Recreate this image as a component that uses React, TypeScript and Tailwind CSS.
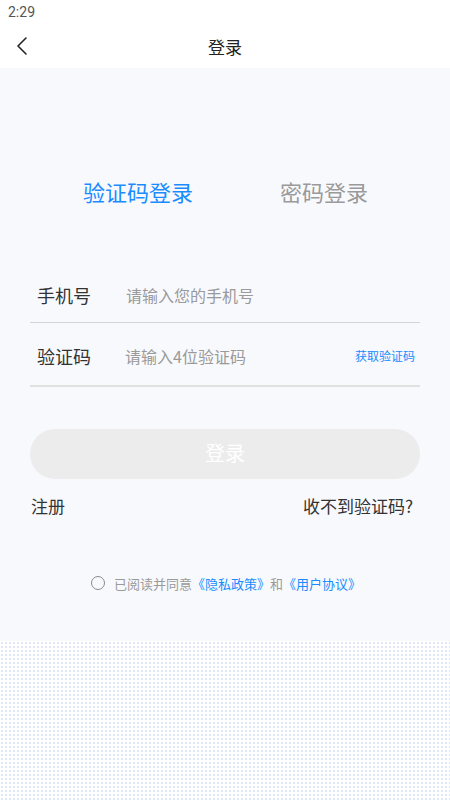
import React from "react";

export default function App() {
  const cjk = { fontFamily: '"Noto Sans CJK SC", "Noto Sans", sans-serif' };
  return (
    <div className="w-[450px] h-[800px] flex flex-col bg-[#f8f9fd] overflow-hidden" style={cjk}>
      <div className="bg-white h-[24px] flex items-center pl-[8px] text-[14px] text-[#555]" style={{ fontFamily: 'Roboto, "Noto Sans", sans-serif' }}>
        2:29
      </div>
      <div className="bg-white h-[44px] flex items-center relative">
        <svg className="ml-[15px]" width="14" height="20" viewBox="0 0 14 20" fill="none">
          <path d="M11 2 L3 10 L11 18" stroke="#222" strokeWidth="1.6" strokeLinecap="round" strokeLinejoin="round" />
        </svg>
        <div className="absolute left-0 right-0 text-center text-[17px] text-[#222] leading-none pointer-events-none">登录</div>
      </div>
      <div className="flex-1 flex flex-col">
        <div className="h-[573px] flex flex-col px-[30px] leading-none">
          <div className="flex mt-[104px] h-[38px] items-center">
            <div className="w-[216px] text-center text-[22px] text-[#1a8cff]">验证码登录</div>
            <div className="flex-1 text-center text-[22px] text-[#9a9a9a] pr-[18px]">密码登录</div>
          </div>
          <div className="mt-[57px] h-[56px] flex items-center border-b border-[#d4d4d4]">
            <div className="w-[96px] pl-[7px] text-[18px] text-[#333]">手机号</div>
            <div className="text-[16px] text-[#9a9a9a]">请输入您的手机号</div>
          </div>
          <div className="h-[64px] pt-[4px] flex items-center border-b-2 border-[#e0e0e0]">
            <div className="w-[95px] pl-[7px] text-[18px] text-[#333]">验证码</div>
            <div className="flex-1 text-[16px] text-[#9a9a9a]">请输入4位验证码</div>
            <div className="text-[12px] text-[#1a8cff] pr-[5px]">获取验证码</div>
          </div>
          <div className="mt-[42px] h-[50px] rounded-full bg-[#ececec] flex items-center justify-center text-[20px] text-white pb-[3px]">
            登录
          </div>
          <div className="mt-[11px] flex justify-between items-center h-[30px] text-[17px] text-[#333]">
            <span className="pl-[1px]">注册</span>
            <span className="pr-[7px]">收不到验证码?</span>
          </div>
          <div className="mt-[53px] h-[20px] flex items-center justify-center text-[13px] text-[#9a9a9a] pl-[2px]">
            <span className="w-[14px] h-[14px] rounded-full border-[1.5px] border-[#8a8a8a] mr-[9px]"></span>
            <span>已阅读并同意</span>
            <span className="text-[#1a8cff]">《隐私政策》</span>
            <span>和</span>
            <span className="text-[#1a8cff]">《用户协议》</span>
          </div>
        </div>
        <div className="flex-1 bg-white bg-[radial-gradient(circle,#dfe6f7_0.8px,transparent_1.2px)] bg-[size:4px_4px]"></div>
      </div>
    </div>
  );
}
